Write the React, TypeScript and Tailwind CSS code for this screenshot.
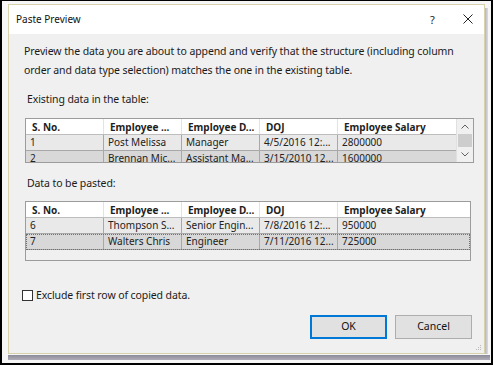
import React from "react";

const font = { fontFamily: '"Noto Sans", "Open Sans", sans-serif' };

type Row = string[];

function Table({ rows, scroll, width, selectedLast }: { rows: Row[]; scroll?: boolean; width: string; selectedLast?: boolean }) {
  const headers = ["S. No.", "Employee ...", "Employee D...", "DOJ", "Employee Salary"];
  return (
    <div className={`flex border border-[#9c9c9c] bg-[#f0f0f0] ${width} ${scroll ? "h-[45px]" : "h-[60px]"} overflow-hidden`}>
      <div className="flex-1 flex flex-col overflow-hidden">
        <div className="grid grid-cols-[78px_78px_78px_78px_1fr] h-[16px] bg-white border-b border-[#bdbdbd] shrink-0">
          {headers.map((h, i) => (
            <div key={i} className={`pl-[6px] text-[10px] font-bold leading-[16px] text-[#1e1e1e] whitespace-nowrap overflow-hidden ${i < 4 ? "border-r border-[#e3e3e3]" : ""}`}>
              {h}
            </div>
          ))}
        </div>
        {rows.map((r, ri) => {
          const dark = ri % 2 === 1;
          return (
            <div
              key={ri}
              className={`grid grid-cols-[78px_78px_78px_78px_1fr] h-[16px] shrink-0 border-b border-[#a8a8a8] ${dark ? "bg-[#d8d8d8]" : "bg-[#e9e9e9]"} ${selectedLast && ri === rows.length - 1 ? "outline outline-1 outline-dotted outline-[#707070] -outline-offset-1" : ""}`}
            >
              {r.map((c, ci) => (
                <div key={ci} className={`pl-[4px] text-[10px] leading-[15px] text-[#222] whitespace-nowrap overflow-hidden ${ci < 4 ? "border-r border-[#a8a8a8]" : ""}`}>
                  {c}
                </div>
              ))}
            </div>
          );
        })}
      </div>
      {scroll && (
        <div className="w-[17px] flex flex-col bg-[#f0f0f0] border-l border-[#e0e0e0] shrink-0">
          <div className="h-[15px] flex items-center justify-center">
            <svg width="8" height="5" viewBox="0 0 8 5"><path d="M0.5 4.5 L4 1 L7.5 4.5" fill="none" stroke="#606060" strokeWidth="1" /></svg>
          </div>
          <div className="h-[13px] mx-[1px] bg-[#cdcdcd]" />
          <div className="flex-1 flex items-center justify-center">
            <svg width="8" height="5" viewBox="0 0 8 5"><path d="M0.5 0.5 L4 4 L7.5 0.5" fill="none" stroke="#606060" strokeWidth="1" /></svg>
          </div>
        </div>
      )}
    </div>
  );
}

export default function App() {
  return (
    <div className="w-[493px] h-[365px] bg-black pt-[1px] px-[2px] pb-[2px]" style={font}>
      <div className="h-full bg-[#f6f6f6] flex flex-col pl-[6px] pr-[3px] pt-[3px]">
        <div className="flex">
          <div className="w-[479px] h-[350px] border border-[#d8d1ad] flex flex-col bg-white">
            <div className="h-[29px] shrink-0 bg-white flex items-center pl-[7px] relative">
              <span className="text-[10px] text-[#111]">Paste Preview</span>
              <span className="absolute left-[421px] top-[7px] text-[11px] text-[#222]">?</span>
              <svg className="absolute left-[454px] top-[9px]" width="10" height="10" viewBox="0 0 10 10">
                <path d="M0.5 0.5 L9.5 9.5 M9.5 0.5 L0.5 9.5" stroke="#222" strokeWidth="1" />
              </svg>
            </div>
            <div className="flex-1 bg-[#f0f0f0] flex flex-col pl-[15px] pr-[10px] relative">
              <div className="mt-[8px] text-[10.5px] tracking-[-0.1px] leading-[19px] text-[#1a1a1a] whitespace-nowrap">
                Preview the data you are about to append and verify that the structure (including column
                <br />
                order and data type selection) matches the one in the existing table.
              </div>
              <div className="mt-[10px] pl-[3px] text-[10.5px] tracking-[-0.1px] leading-[19px] text-[#1a1a1a]">Existing data in the table:</div>
              <div className="mt-[9px] ml-[1px]">
                <Table
                  width="w-[449px]"
                  scroll
                  rows={[
                    ["1", "Post Melissa", "Manager", "4/5/2016 12:...", "2800000"],
                    ["2", "Brennan Mic...", "Assistant Ma...", "3/15/2010 12...", "1600000"],
                  ]}
                />
              </div>
              <div className="mt-[11px] pl-[3px] text-[10.5px] tracking-[-0.1px] leading-[19px] text-[#1a1a1a]">Data to be pasted:</div>
              <div className="mt-[8px] ml-[1px]">
                <Table
                  width="w-[446px]"
                  selectedLast
                  rows={[
                    ["6", "Thompson S...", "Senior Engin...", "7/8/2016 12:...", "950000"],
                    ["7", "Walters Chris", "Engineer", "7/11/2016 12...", "725000"],
                  ]}
                />
              </div>
              <div className="mt-[27px] -ml-[2px] flex items-center gap-[3px]">
                <div className="w-[11px] h-[11px] border border-[#333] bg-white" />
                <span className="text-[10.5px] tracking-[-0.1px] leading-[14px] text-[#1a1a1a]">Exclude first row of copied data.</span>
              </div>
              <div className="mt-[13px] flex justify-end gap-[8px] pr-[2px]">
                <button className="w-[77px] h-[24px] border-2 border-[#0078d7] bg-[#e1e1e1] text-[10.5px] text-[#111]">OK</button>
                <button className="w-[77px] h-[24px] border border-[#adadad] bg-[#e1e1e1] text-[10.5px] text-[#111]">Cancel</button>
              </div>
              <div className="absolute right-[2px] bottom-[2px] w-[6px] h-[6px] opacity-60">
                <svg width="6" height="6" viewBox="0 0 6 6"><rect x="4" y="0" width="1" height="1" fill="#999"/><rect x="2" y="2" width="1" height="1" fill="#999"/><rect x="4" y="2" width="1" height="1" fill="#999"/><rect x="0" y="4" width="1" height="1" fill="#999"/><rect x="2" y="4" width="1" height="1" fill="#999"/><rect x="4" y="4" width="1" height="1" fill="#999"/></svg>
              </div>
            </div>
          </div>
          <div className="w-[3px] mt-[4px] bg-gradient-to-r from-[#b8b6c0] to-[#dcdbe0]" />
        </div>
        <div className="mt-[1px] h-[5px] w-[482px] bg-gradient-to-b from-[#8d8b99] to-[#aeadb8]" />
      </div>
    </div>
  );
}
